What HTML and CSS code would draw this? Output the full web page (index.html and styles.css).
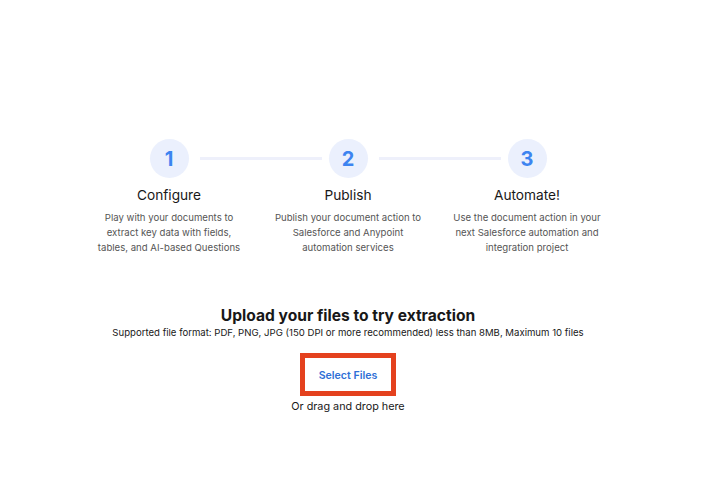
FILE: index.html
```html
<!DOCTYPE html>
<html lang="en">
<head>
  <meta charset="UTF-8" />
  <meta name="viewport" content="width=device-width, initial-scale=1.0"/>
  <title>Document Extraction</title>
  <link rel="stylesheet" href="styles.css">
</head>
<body>
  <main class="page">
    <div class="steps">
      <div class="step">
        <div class="step-num">1</div>
        <h3>Configure</h3>
        <p>Play with your documents to extract key data with fields, tables, and AI-based Questions</p>
      </div>
      <div class="step">
        <div class="step-num">2</div>
        <h3>Publish</h3>
        <p>Publish your document action to Salesforce and Anypoint automation services</p>
      </div>
      <div class="step">
        <div class="step-num">3</div>
        <h3>Automate!</h3>
        <p>Use the document action in your next Salesforce automation and integration project</p>
      </div>
    </div>

    <section class="upload">
      <h2>Upload your files to try extraction</h2>
      <div class="formats">Supported file format: PDF, PNG, JPG (150 DPI or more recommended) less than 8MB, Maximum 10 files</div>
      <div class="highlight">
        <button class="select-btn">Select Files</button>
      </div>
      <div class="drop-hint">Or drag and drop here</div>
    </section>
  </main>
</body>
</html>
```

FILE: styles.css
```css
body {
  margin: 0;
  font-family: 'Inter', 'Liberation Sans', sans-serif;
  color: #181818;
  background: #fff;
}
.page {
  width: 696px;
  padding-top: 139px;
  display: flex;
  flex-direction: column;
  align-items: center;
}
.steps {
  display: flex;
  justify-content: center;
}
.step {
  width: 179px;
  position: relative;
  display: flex;
  flex-direction: column;
  align-items: center;
  text-align: center;
}
.step:not(:last-child)::after {
  content: '';
  position: absolute;
  top: 18px;
  left: 120px;
  width: 122px;
  height: 3px;
  background: #eef0fb;
}
.step-num {
  width: 39px;
  height: 39px;
  border-radius: 50%;
  background: #ebf0fd;
  color: #3d84f0;
  font-size: 20px;
  font-weight: 700;
  display: flex;
  align-items: center;
  justify-content: center;
}
.step h3 {
  margin: 9px 0 7px;
  font-size: 13.7px;
  font-weight: 400;
  line-height: 16px;
}
.step p {
  margin: 0;
  width: 154px;
  font-size: 9.6px;
  line-height: 15px;
  color: #555;
}
.upload {
  margin-top: 51px;
  display: flex;
  flex-direction: column;
  align-items: center;
}
.upload h2 {
  margin: 0;
  font-size: 15.6px;
  font-weight: 700;
  line-height: 20px;
}
.formats {
  font-size: 9.6px;
  line-height: 14px;
}
.highlight {
  margin-top: 13px;
  border: 5px solid #e4411e;
}
.select-btn {
  width: 86px;
  height: 33px;
  padding: 2px 0 0;
  border: none;
  background: #fff;
  color: #2f6fd6;
  font-family: inherit;
  font-size: 10.6px;
  font-weight: 600;
  cursor: pointer;
  display: block;
}
.drop-hint {
  margin-top: 4px;
  font-size: 10.8px;
  line-height: 14px;
}
```
